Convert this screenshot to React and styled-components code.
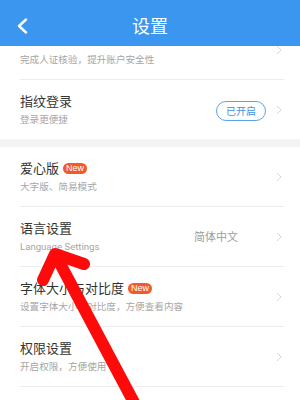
import React from "react";
import styled, { createGlobalStyle } from "styled-components";

const Global = createGlobalStyle`
  html, body { margin: 0; padding: 0; background: #fff; }
  body { font-family: Roboto, "Noto Sans CJK SC", "Noto Sans", sans-serif; }
`;

const Page = styled.div`
  position: relative;
  width: 300px;
  height: 400px;
  overflow: hidden;
  background: #fff;
`;

const Header = styled.header`
  position: absolute;
  top: 0;
  left: 0;
  right: 0;
  height: 46px;
  background: #3b96f0;
  display: flex;
  align-items: center;
  justify-content: center;
  z-index: 2;
`;

const BackButton = styled.div`
  position: absolute;
  left: 16px;
  top: 18px;
  width: 14px;
  height: 16px;
`;

const HeaderTitle = styled.h1`
  margin: 3px 0 0;
  color: #fff;
  font-family: "Noto Sans CJK SC", sans-serif;
  font-size: 18px;
  font-weight: 400;
  line-height: 1;
`;

const Scroll = styled.div`
  padding-top: 20px;
`;

const Group = styled.section`
  background: #fff;
`;

const Band = styled.div`
  height: 8px;
  background: #f3f3f3;
`;

const Row = styled.div`
  margin: 0 16px 0 20px;
  height: 59px;
  display: flex;
  align-items: center;
  border-bottom: ${(p) => (p.$last ? "none" : "1px solid #ececec")};
`;

const Texts = styled.div`
  flex: 1;
  display: flex;
  flex-direction: column;
  gap: 2px;
  min-width: 0;
`;

const TitleLine = styled.div`
  display: flex;
  align-items: center;
  height: 17px;
`;

const Title = styled.span`
  font-size: 13px;
  color: #333;
  line-height: 17px;
  white-space: nowrap;
`;

const NewBadge = styled.span`
  margin-left: 4px;
  height: 11px;
  padding: 0 3px;
  border-radius: 6px;
  background: #f05a2c;
  color: #fff;
  font-family: "Liberation Sans", Arial, sans-serif;
  font-size: 9px;
  line-height: 11px;
`;

const Sub = styled.div`
  font-size: 9.6px;
  color: #a6a6a6;
  line-height: 15px;
  white-space: nowrap;
`;

const Value = styled.span`
  font-size: 11px;
  color: #9c9c9c;
  margin-right: ${(p) => p.$mr || 10}px;
  margin-top: -2px;
`;

const Pill = styled.span`
  box-sizing: border-box;
  width: 50px;
  height: 20px;
  border: 1px solid #5aa5ea;
  border-radius: 10px;
  color: #3d93e6;
  font-size: 10px;
  display: flex;
  align-items: center;
  justify-content: center;
  margin-right: 10px;
  margin-top: 2px;
`;

const Chevron = styled.svg`
  width: 6px;
  height: 10px;
  flex: none;
  margin-right: 2px;
`;

const Overlay = styled.svg`
  position: absolute;
  top: 0;
  left: 0;
  width: 300px;
  height: 400px;
  z-index: 3;
  pointer-events: none;
`;

const Arrow = () => (
  <Chevron viewBox="0 0 6 10">
    <polyline points="1,1 5,5 1,9" fill="none" stroke="#d6d6d6" strokeWidth="1" />
  </Chevron>
);

const Item = ({ title, sub, isNew, right, last }) => (
  <Row $last={last}>
    <Texts>
      <TitleLine>
        {title && <Title>{title}</Title>}
        {isNew && <NewBadge>New</NewBadge>}
      </TitleLine>
      <Sub>{sub}</Sub>
    </Texts>
    {right}
    <Arrow />
  </Row>
);

export default function App() {
  return (
    <Page>
      <Global />
      <Header>
        <BackButton>
          <svg width="14" height="16" viewBox="0 0 14 16">
            <polyline points="10,1.5 3,8 10,14.5" fill="none" stroke="#fff" strokeWidth="2.4" strokeLinecap="round" strokeLinejoin="round" />
          </svg>
        </BackButton>
        <HeaderTitle>设置</HeaderTitle>
      </Header>
      <Scroll>
        <Group>
          <Item sub="完成人证核验，提升账户安全性" />
          <Item title="指纹登录" sub="登录更便捷" right={<Pill>已开启</Pill>} last />
        </Group>
        <Band />
        <Group>
          <Item title="爱心版" sub="大字版、简易模式" isNew />
          <Item title="语言设置" sub="Language Settings" right={<Value $mr={38}>简体中文</Value>} />
          <Item title="字体大小与对比度" sub="设置字体大小与对比度，方便查看内容" isNew />
          <Item title="权限设置" sub="开启权限，方便使用" />
        </Group>
      </Scroll>
      <Overlay viewBox="0 0 300 400">
        <line x1="56" y1="256" x2="138" y2="410" stroke="#ff0a0a" strokeWidth="12" strokeLinecap="round" />
        <polyline points="43,280 55,254 84,264" fill="none" stroke="#ff0a0a" strokeWidth="12" strokeLinecap="round" strokeLinejoin="round" />
      </Overlay>
    </Page>
  );
}
